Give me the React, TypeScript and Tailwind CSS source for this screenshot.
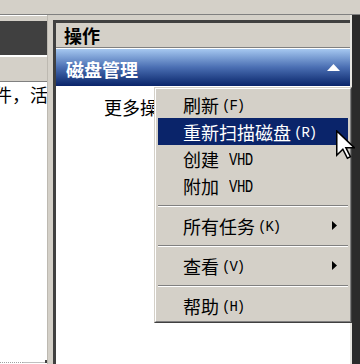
import React from "react";

const cjk = "font-['Noto_Sans_CJK_SC','Noto_Sans',sans-serif]";

type Item =
  | { kind: "item"; label: string; key?: string; tag?: string; active?: boolean; sub?: boolean }
  | { kind: "sep" };

const items: Item[] = [
  { kind: "item", label: "刷新", key: "(F)" },
  { kind: "item", label: "重新扫描磁盘", key: "(R)", active: true },
  { kind: "item", label: "创建", tag: "VHD" },
  { kind: "item", label: "附加", tag: "VHD" },
  { kind: "sep" },
  { kind: "item", label: "所有任务", key: "(K)", sub: true },
  { kind: "sep" },
  { kind: "item", label: "查看", key: "(V)", sub: true },
  { kind: "sep" },
  { kind: "item", label: "帮助", key: "(H)" },
];

function ContextMenu() {
  return (
    <div className="absolute left-[154px] top-[87px] w-[198px] border border-t-[#d4d0c8] border-l-[#d4d0c8] border-r-[#404040] border-b-[#404040] bg-[#d4d0c8]">
      <div className="border border-t-white border-l-white border-r-[#808080] border-b-[#808080] p-[2px]">
        {items.map((it, i) =>
          it.kind === "sep" ? (
            <div key={i} className="h-[13px] flex flex-col justify-center">
              <div className="h-px bg-[#808080]" />
              <div className="h-px bg-white" />
            </div>
          ) : (
            <div
              key={i}
              className={`h-[27px] flex items-center pl-[25px] pr-[8px] ${
                it.active ? "bg-[#0a246a] text-white" : "text-black"
              }`}
            >
              <span className="text-[18px] leading-[18px]">{it.label}</span>
              {it.key && (
                <span className="ml-[3px] mt-[2px] font-['Liberation_Mono',monospace] text-[14px] leading-[18px] tracking-[-1px] scale-y-110 inline-block">
                  {it.key}
                </span>
              )}
              {it.tag && (
                <span className="ml-[10px] mt-[2px] font-['Liberation_Mono',monospace] text-[14px] leading-[14px] tracking-[-0.5px] scale-y-125 inline-block">
                  {it.tag}
                </span>
              )}
              {it.sub && (
                <svg className="ml-auto mr-[3px]" width="5" height="9" viewBox="0 0 5 9">
                  <polygon points="0,0 5,4.5 0,9" fill="#000" />
                </svg>
              )}
            </div>
          )
        )}
      </div>
    </div>
  );
}

export default function App() {
  return (
    <div className={`relative w-[360px] h-[364px] overflow-hidden bg-[#d4d0c8] flex flex-col ${cjk}`}>
      {/* toolbar strip */}
      <div className="h-[15px] shrink-0 border-b border-[#808080]" />

      <div className="flex flex-1 min-h-0">
        {/* middle pane (cut off) */}
        <div className="w-[47px] flex flex-col">
          <div className="h-[6px] border-t border-white" />
          <div className="h-[34px] bg-[#404040]" />
          <div className="h-[2px] bg-white" />
          <div className="h-[25px] border-b border-[#808080]" />
          <div className="flex-1 bg-white flex flex-col overflow-hidden">
            <div className="pt-[3px] -ml-[24px] whitespace-nowrap text-[18px] leading-[18px] text-black">
              文件，活动
            </div>
            <div className="mt-auto mb-[1px] flex items-end h-[3px]">
              <div className="w-[23px] border-t border-dotted border-[#a0a0a0]" />
              <div className="w-[22px] border-t border-[#c0c0c0]" />
              <div className="w-[2px] h-[3px] bg-[#404040]" />
            </div>
          </div>
        </div>

        {/* splitter */}
        <div className="w-[6px] bg-[#d4d0c8] border-l border-[#bdb9b1]" />
        <div className="w-[3px] bg-[#404040] mt-[5px]" />

        {/* action pane */}
        <div className="w-[294px] flex flex-col">
          <div className="h-[5px]" />
          <div className="h-[3px] bg-[#404040]" />
          <div className="h-[25px] flex items-center pl-[8px] border-b border-[#808080]">
            <span className="text-[18px] leading-[18px] font-bold text-black">操作</span>
          </div>
          <div className="h-px bg-white" />
          <div className="h-[37px] flex items-center justify-between pl-[10px] pr-[10px] bg-gradient-to-b from-[#a6c8f0] via-[#4a6eb2] to-[#0a246a]">
            <span className="text-[18px] leading-[18px] font-bold text-white pt-[2px]">磁盘管理</span>
            <svg width="13" height="7" viewBox="0 0 13 7">
              <polygon points="6.5,0 13,7 0,7" fill="#fff" />
            </svg>
          </div>
          <div className="flex-1 bg-white pt-[9px] pl-[48px] border-t border-white">
            <span className="text-[18px] leading-[18px] text-black whitespace-nowrap">更多操作</span>
          </div>
        </div>

        {/* right edge */}
        <div className="w-[2px] bg-[#e8e6e1]" />
        <div className="w-[8px] bg-[#2b2b2b]" />
      </div>

      <ContextMenu />

      {/* mouse pointer */}
      <svg className="absolute left-[336px] top-[130px]" width="19" height="30" viewBox="0 0 12.5 19.5">
        <polygon
          points="0.5,0.5 0.5,16.5 4.5,12.5 7.5,18.5 9.5,17.5 6.5,11.5 12,11.5"
          fill="#fff"
          stroke="#000"
          strokeWidth="1"
          strokeLinejoin="miter"
        />
      </svg>
    </div>
  );
}
